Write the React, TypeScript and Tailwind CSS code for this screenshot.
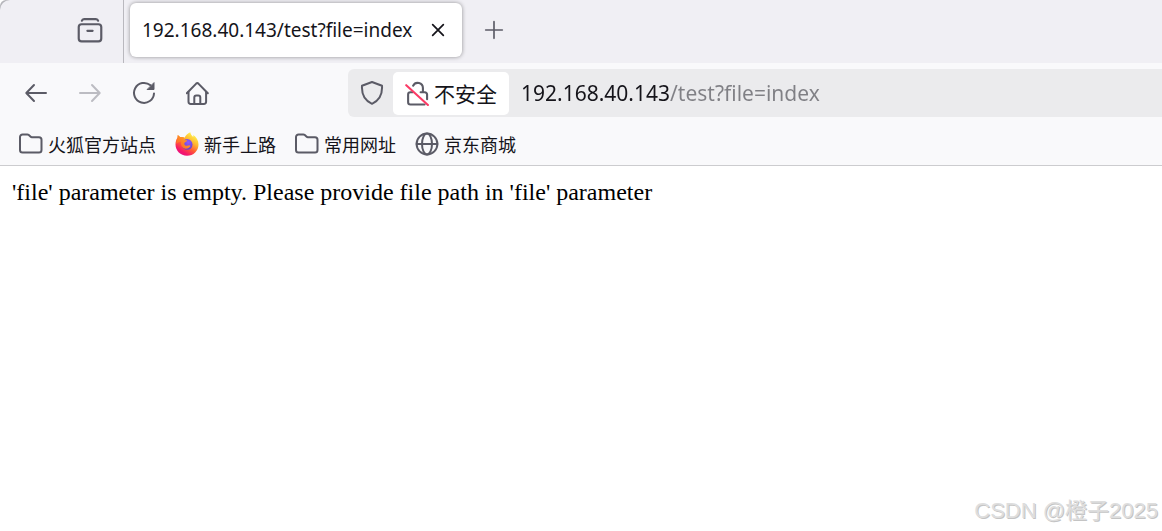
import type { ReactNode } from "react";

const bookmarks = [
  { title: "火狐官方站点", icon: <FolderIcon /> },
  { title: "新手上路", icon: <FirefoxIcon /> },
  { title: "常用网址", icon: <FolderIcon /> },
  { title: "京东商城", icon: <GlobeIcon /> }
];

function Stroke({ children, className = "size-6" }: { children: ReactNode; className?: string }) {
  return (
    <svg
      viewBox="0 0 24 24"
      className={`${className} shrink-0`}
      fill="none"
      stroke="currentColor"
      strokeWidth="2"
      strokeLinecap="round"
      strokeLinejoin="round"
      aria-hidden="true"
    >
      {children}
    </svg>
  );
}

function FolderIcon() {
  return (
    <Stroke>
      <path d="M3.500 2.500h4.800a2.200 2.200 0 0 1 1.500.6l1.600 1.500a2.200 2.200 0 0 0 1.500.6H20a2.500 2.500 0 0 1 2.500 2.500v10.300a2.500 2.500 0 0 1-2.500 2.500H3.500A2.500 2.500 0 0 1 1 18V5a2.500 2.500 0 0 1 2.500-2.500z" />
    </Stroke>
  );
}

function GlobeIcon() {
  return (
    <Stroke>
      <circle cx="12" cy="12" r="10.4" />
      <ellipse cx="12" cy="12" rx="5" ry="10.4" />
      <path d="M1.6 12h20.8" />
    </Stroke>
  );
}

function FirefoxIcon() {
  return (
    <svg viewBox="0 0 24 24" className="size-6 shrink-0" aria-hidden="true">
      <defs>
        <linearGradient id="fx-body" x1="0.85" y1="0.05" x2="0.25" y2="1">
          <stop offset="0.05" stopColor="#fff44f" />
          <stop offset="0.35" stopColor="#ffb52e" />
          <stop offset="0.6" stopColor="#ff5a36" />
          <stop offset="0.85" stopColor="#f5156c" />
          <stop offset="1" stopColor="#e31587" />
        </linearGradient>
        <linearGradient id="fx-head" x1="0" y1="1" x2="1" y2="0">
          <stop offset="0" stopColor="#ff5a2c" />
          <stop offset="1" stopColor="#ffb31f" />
        </linearGradient>
        <radialGradient id="fx-globe" cx="0.6" cy="0.3" r="0.8">
          <stop offset="0" stopColor="#9059ff" />
          <stop offset="1" stopColor="#5b3bc4" />
        </radialGradient>
      </defs>
      <path
        d="M15.300.3c.3 2.200 1.600 3.300 2.900 4.700.2-.8.2-1.300.1-2 3 2 5.200 5.600 5.200 9.400 0 6.300-5 11.300-11.500 11.300S.5 18.800.5 12.600c0-3 .8-5.300 2-6.900L2.800 3l2.300 2.100c1.500-.4 3.200-.1 4.500.6 1.100-2.200 3.100-4.100 5.700-5.400z"
        fill="url(#fx-body)"
      />
      <circle cx="12.2" cy="12.4" r="5.3" fill="url(#fx-globe)" />
      <path
        d="M2.800 3l2.300 2.100c1.600-.4 3.200-.1 4.500.6-.7.700-1 1.400-1.100 2 .8.500 2 .6 3.700.6-.2 1.500-2.300 1.900-2.800 2.600-.4 1.200.4 2.500 1.900 2.900 1.400.3 2.300-.6 3.500-.4.7.2.7.8.2 1.300-1.700 1.900-4.500 2.600-6.600 1.200C5.900 14.300 5.500 11.600 6.200 9.600 4.500 9.800 3 10.500 1.300 12c0-3 .3-4.600 1.200-6.300z"
        fill="url(#fx-head)"
      />
    </svg>
  );
}

function TabStrip() {
  return (
    <div className="flex h-[63px] rounded-tl-[10px] bg-[#f0eff4] pl-[66px] text-[#5b5b66]">
      <button type="button" aria-label="Recent tabs" className="flex h-[60px] w-12 items-center justify-center">
        <Stroke className="size-[26px]">
          <rect x="1.6" y="6.7" width="20.8" height="15.8" rx="2.6" />
          <path d="M4.500 3.500c.3-1.100 1-1.600 2-1.600h11c1 0 1.700.5 2 1.600" />
          <path d="M9.600 12.800h4.800" />
        </Stroke>
      </button>
      <div className="ml-[9px] w-px bg-[#b9b8be]" />
      <div className="mt-[3px] mb-1.5 ml-1.5 flex w-[332px] items-center rounded-md bg-white px-3 shadow-[0_0_4px_rgba(0,0,0,0.4)]">
        <span className="flex-1 truncate font-['Noto_Sans',sans-serif] text-[19px] leading-7 text-[#15141a]">
          192.168.40.143/test?file=index
        </span>
        <button type="button" aria-label="Close tab" className="flex size-6 items-center justify-center text-[#15141a]">
          <Stroke className="size-4">
            <path d="M4 4l16 16M20 4L4 20" strokeWidth="2.6" />
          </Stroke>
        </button>
      </div>
      <button type="button" aria-label="New tab" className="ml-2 flex h-[60px] w-12 items-center justify-center">
        <Stroke className="size-5">
          <path d="M12 2v20M2 12h20" />
        </Stroke>
      </button>
    </div>
  );
}

function NavToolbar() {
  return (
    <div className="flex h-15 items-center bg-[#f9f9fb] pl-3 text-[#5b5b66]">
      <div className="flex gap-1.5">
        <button type="button" aria-label="Back" className="flex size-12 items-center justify-center">
          <Stroke>
            <path d="M22 12H2.500M10 4L2.300 12l7.700 8" />
          </Stroke>
        </button>
        <button type="button" aria-label="Forward" disabled className="flex size-12 items-center justify-center text-[#bcbcc2]">
          <Stroke>
            <path d="M2 12h19.500M14 4l7.700 8-7.700 8" />
          </Stroke>
        </button>
        <button type="button" aria-label="Reload" className="flex size-12 items-center justify-center">
          <Stroke>
            <path d="M22 12.500A10 10 0 1 1 18.500 4.300" />
            <path d="M22 2v6.500h-6.500z" fill="currentColor" strokeWidth="1" />
          </Stroke>
        </button>
        <button type="button" aria-label="Home" className="flex size-12 items-center justify-center">
          <Stroke>
            <path d="M.8 12.300L10.200 2.600a1.600 1.600 0 0 1 2.200 0l9.400 9.700" />
            <path d="M2.500 11v9.800a2.300 2.300 0 0 0 2.300 2.200h13a2.300 2.300 0 0 0 2.300-2.200V11" />
            <path d="M8.300 22.800v-6.300a2 2 0 0 1 2-2h2a2 2 0 0 1 2 2v6.300" />
          </Stroke>
        </button>
      </div>

      <div className="ml-[126px] flex h-12 flex-1 items-center rounded-l-md bg-[#ebebed]">
        <button type="button" aria-label="Tracking protection" className="flex h-full w-[45px] items-center justify-center pl-0.5">
          <Stroke>
            <path d="M12 1l10 3.700c.4 6.500-1.200 14.300-10 18.100C3.200 19 1.600 11.200 2 4.700z" />
          </Stroke>
        </button>
        <button
          type="button"
          className="flex h-[43px] w-[116px] items-center gap-1 rounded-[5px] bg-white pl-3 font-['Noto_Sans_CJK_SC',sans-serif] text-[21px] leading-7 whitespace-nowrap text-[#15141a]"
        >
          <span className="text-[#5b5b66]">
            <Stroke className="size-[25px]">
              <path d="M7.800 4.500a5 5 0 0 1 9.400 2.300v3.400" />
              <path d="M7.500 10.800H5.200a2.200 2.200 0 0 0-2.200 2.200v7.300a2.200 2.200 0 0 0 2.200 2.200h13.600" />
              <path d="M15 10.800h4a2.200 2.200 0 0 1 2.200 2.200v4.500" />
              <path d="M1.200 4l20.800 19" stroke="#fb3b66" />
            </Stroke>
          </span>
          不安全
        </button>
        {/* the host is dark, the path after it is dimmed */}
        <input
          type="text"
          aria-label="Address"
          defaultValue="192.168.40.143/test?file=index"
          className="h-full min-w-0 flex-1 bg-linear-to-r from-[#15141a] from-[160px] to-[#808085] to-[160px] bg-clip-text pl-3 font-['Noto_Sans',sans-serif] text-[21px] text-transparent outline-none"
        />
      </div>
    </div>
  );
}

export default function App() {
  return (
    <div className="flex min-h-screen flex-col bg-white">
      <header className="rounded-tl-md border-b border-[#cccccf] bg-[#b5b5ba]">
        <TabStrip />
        <NavToolbar />
        <nav className="flex h-[42px] items-center gap-[19px] bg-[#f9f9fb] pl-[19px] font-['Noto_Sans_CJK_SC',sans-serif] text-lg leading-6 text-[#15141a]">
          {bookmarks.map((bookmark) => (
            <a key={bookmark.title} href="#" className="flex items-center gap-[5px] whitespace-nowrap">
              <span className="text-[#5b5b66]">{bookmark.icon}</span>
              {bookmark.title}
            </a>
          ))}
        </nav>
      </header>

      <main className="flex-1 px-3 pt-3 font-['Liberation_Serif',serif] text-2xl leading-7 text-black">
        'file' parameter is empty. Please provide file path in 'file' parameter
      </main>

      <footer className="pr-1 pb-1 text-right font-['Liberation_Sans','Noto_Sans_CJK_SC',sans-serif] text-[22px] leading-8 text-[#dedede] [text-shadow:1px_1px_0_#c4c4c4]">
        CSDN @橙子2025
      </footer>
    </div>
  );
}
